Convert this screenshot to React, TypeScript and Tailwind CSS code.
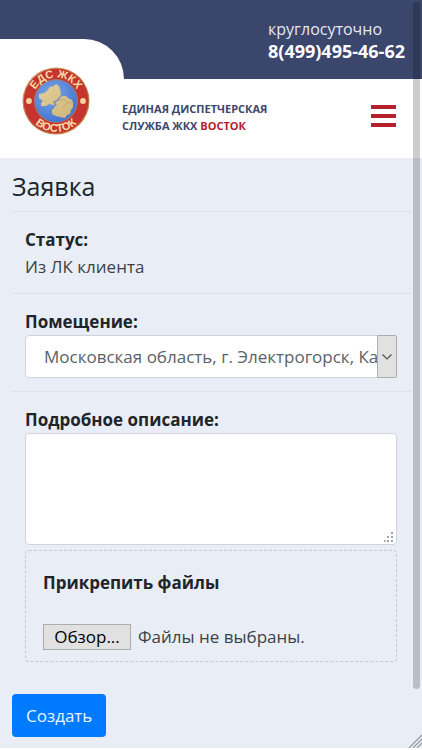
import { useRef, useState } from "react";

function Emblem() {
  return (
    <svg viewBox="0 0 68 68" className="h-[68px] w-[68px]" role="img" aria-label="ЕДС ЖКХ Восток">
      <defs>
        <linearGradient id="gold" x1="0" y1="0" x2="1" y2="1">
          <stop offset="0" stopColor="#e2b878" />
          <stop offset="0.5" stopColor="#b5653a" />
          <stop offset="1" stopColor="#c99a5c" />
        </linearGradient>
        <radialGradient id="sky" cx="0.4" cy="0.35" r="0.7">
          <stop offset="0" stopColor="#7fa6e6" />
          <stop offset="1" stopColor="#3f74cf" />
        </radialGradient>
        <linearGradient id="land" x1="0" y1="0" x2="1" y2="1">
          <stop offset="0" stopColor="#e3d09a" />
          <stop offset="1" stopColor="#cdb57a" />
        </linearGradient>
        <path id="arcTop" d="M10.5 34 A23.5 23.5 0 0 1 57.5 34" />
        <path id="arcBottom" d="M3.2 34 A30.8 30.8 0 0 0 64.8 34" />
      </defs>
      <circle cx="34" cy="34" r="33.5" fill="url(#gold)" />
      <circle cx="34" cy="34" r="32.3" fill="#c5342f" />
      <circle cx="34" cy="34" r="22" fill="#a9766a" />
      <circle cx="34" cy="34" r="21" fill="url(#sky)" />
      <path
        d="M17 27 L22 26 L25 24 L28 20 L32 19 L34 17 L37 19 L38 22 L39 26 L38 30 L41 29 L44 29 L46 31 L50 33 L51 36 L51 40 L49 43 L48 47 L45 48 L43 51 L38 50 L34 49 L30 47 L30 43 L33 40 L31 38 L27 37 L24 39 L19 39 L19 36 L21 34 L17 31 Z"
        fill="url(#land)"
      />
      <path d="M31 39 L34 38 L32 35 L36 33 L38 30" stroke="#5d83bd" strokeWidth="1.2" fill="none" />
      <path d="M37 34 L42 32 L46 36 L41 40 M46 36 L51 35" stroke="#bda468" strokeWidth="0.7" fill="none" />
      <circle cx="7" cy="34" r="2.9" fill="#efd79a" />
      <circle cx="61" cy="34" r="2.9" fill="#efd79a" />
      <text
        fill="#f3dfa6"
        fontSize="11"
        fontWeight="700"
        fontFamily="'Liberation Sans', sans-serif"
        textAnchor="middle"
      >
        <textPath href="#arcTop" startOffset="50%">
          ЕДС ЖКХ
        </textPath>
      </text>
      <text
        fill="#f3dfa6"
        fontSize="11"
        fontWeight="700"
        fontFamily="'Liberation Sans', sans-serif"
        textAnchor="middle"
      >
        <textPath href="#arcBottom" startOffset="50%">
          ВОСТОК
        </textPath>
      </text>
    </svg>
  );
}

function Header() {
  return (
    <header className="flex bg-white">
      <div className="w-[124px] shrink-0 bg-[#3b466c] pt-[39px]">
        <a href="#" className="flex h-[119px] items-center rounded-tr-[40px] bg-white pt-1 pl-[22px]">
          <Emblem />
        </a>
      </div>
      <div className="min-w-0 flex-1">
        <div className="flex h-[79px] justify-end bg-[#3b466c] pt-[18px] pr-[17px] leading-[22px] text-white">
          <div>
            <p className="text-[16px] text-[#e4e7f0]">круглосуточно</p>
            <a href="tel:84994954662" className="block text-[18px] font-bold">
              8(499)495-46-62
            </a>
          </div>
        </div>
        <div className="-ml-[2px] flex h-[74px] items-center justify-between pr-[26px]">
          <p className="pt-[2px] text-[11px] leading-[17px] font-bold text-[#3b466c]">
            ЕДИНАЯ ДИСПЕТЧЕРСКАЯ
            <br />
            СЛУЖБА ЖКХ <span className="text-[#b5202c]">ВОСТОК</span>
          </p>
          <button type="button" aria-label="Меню" className="flex w-[25px] flex-col gap-[5px]">
            <span className="h-1 bg-[#b5202c]" />
            <span className="h-1 bg-[#b5202c]" />
            <span className="h-1 bg-[#b5202c]" />
          </button>
        </div>
      </div>
    </header>
  );
}

function FilePicker() {
  const input = useRef<HTMLInputElement>(null);
  const [name, setName] = useState("");
  return (
    <div className="mt-[5px] h-[112px] rounded-[4px] border border-dashed border-[#c6c9d2] px-[17px] pt-[18px]">
      <label htmlFor="files" className="block font-bold">
        Прикрепить файлы
      </label>
      <input
        ref={input}
        id="files"
        type="file"
        className="hidden"
        onChange={(e) => setName(e.target.files?.[0]?.name ?? "")}
      />
      <div className="mt-[27px] flex items-center gap-[7px]">
        <button
          type="button"
          onClick={() => input.current?.click()}
          className="h-[26px] w-[88px] border border-[#adadad] bg-[#e1e1e1] leading-6 text-black"
        >
          Обзор...
        </button>
        <span className="text-[#3c4146]">{name || "Файлы не выбраны."}</span>
      </div>
    </div>
  );
}

export default function App() {
  return (
    <div className="relative bg-white pb-[2px] font-['Open_Sans','Noto_Sans',sans-serif] text-[#212529]">
      <Header />
      <main className="bg-[#e9eef6] pr-[11px] pb-[11px] pl-3">
        <h1 className="pt-[11px] pb-2 text-[25px] leading-[34px]">Заявка</h1>
        <form className="text-[17px] leading-[27px]" onSubmit={(e) => e.preventDefault()}>
          <div className="border-t border-[#dce1e9] px-[13px] pt-[14px] pb-[13px]">
            <p className="font-bold">Статус:</p>
            <p className="text-[#3c4146]">Из ЛК клиента</p>
          </div>
          <div className="border-t border-[#dce1e9] pt-[14px] pr-[14px] pb-[13px] pl-[13px]">
            <label htmlFor="place" className="block font-bold">
              Помещение:
            </label>
            <div className="relative">
              <select
                id="place"
                className="block h-[43px] w-full appearance-none rounded-[4px] border border-[#ced4da] bg-white pl-[18px] text-[#5b6168]"
              >
                <option>Московская область, г. Электрогорск, Калинина</option>
              </select>
              <span className="pointer-events-none absolute top-0 right-0 flex h-full w-5 items-center justify-center rounded-r-[2px] border border-[#adadad] bg-[#e1e1e1]">
                <svg viewBox="0 0 10 6" className="h-[6px] w-[10px]" fill="none" stroke="#505050" strokeWidth="1.2">
                  <path d="M0.5 0.5 L5 5 L9.5 0.5" />
                </svg>
              </span>
            </div>
          </div>
          <div className="border-t border-[#dce1e9] pt-[14px] pr-[14px] pl-[13px]">
            <label htmlFor="details" className="block font-bold">
              Подробное описание:
            </label>
            <div className="relative">
              <textarea
                id="details"
                className="block h-[112px] w-full resize-none rounded-[4px] border border-[#ced4da] bg-white px-3 py-1"
              />
              <svg viewBox="0 0 10 10" className="pointer-events-none absolute right-[3px] bottom-[3px] h-[10px] w-[10px]" fill="#a3a3a3">
                <path d="M7 0h2v2h-2z M7 4h2v2h-2z M7 8h2v2h-2z M3 4h2v2h-2z M3 8h2v2h-2z M0 8h1.5v2h-1.5z" />
              </svg>
            </div>
            <FilePicker />
          </div>
          <button type="submit" className="mt-8 block h-[43px] rounded-[4px] bg-[#007bff] px-[14px] text-[#e8f3ff]">
            Создать
          </button>
        </form>
      </main>
      <div className="absolute top-[2px] right-[2px] bottom-[61px] w-[7px] rounded-full bg-black/20" />
      <svg
        viewBox="0 0 14 14"
        className="absolute right-0 bottom-[2px] h-[14px] w-[14px]"
        fill="none"
        stroke="#8f959d"
        strokeWidth="1.1"
      >
        <path d="M1 14 L14 1 M5 14 L14 5 M9 14 L14 9" />
      </svg>
    </div>
  );
}
